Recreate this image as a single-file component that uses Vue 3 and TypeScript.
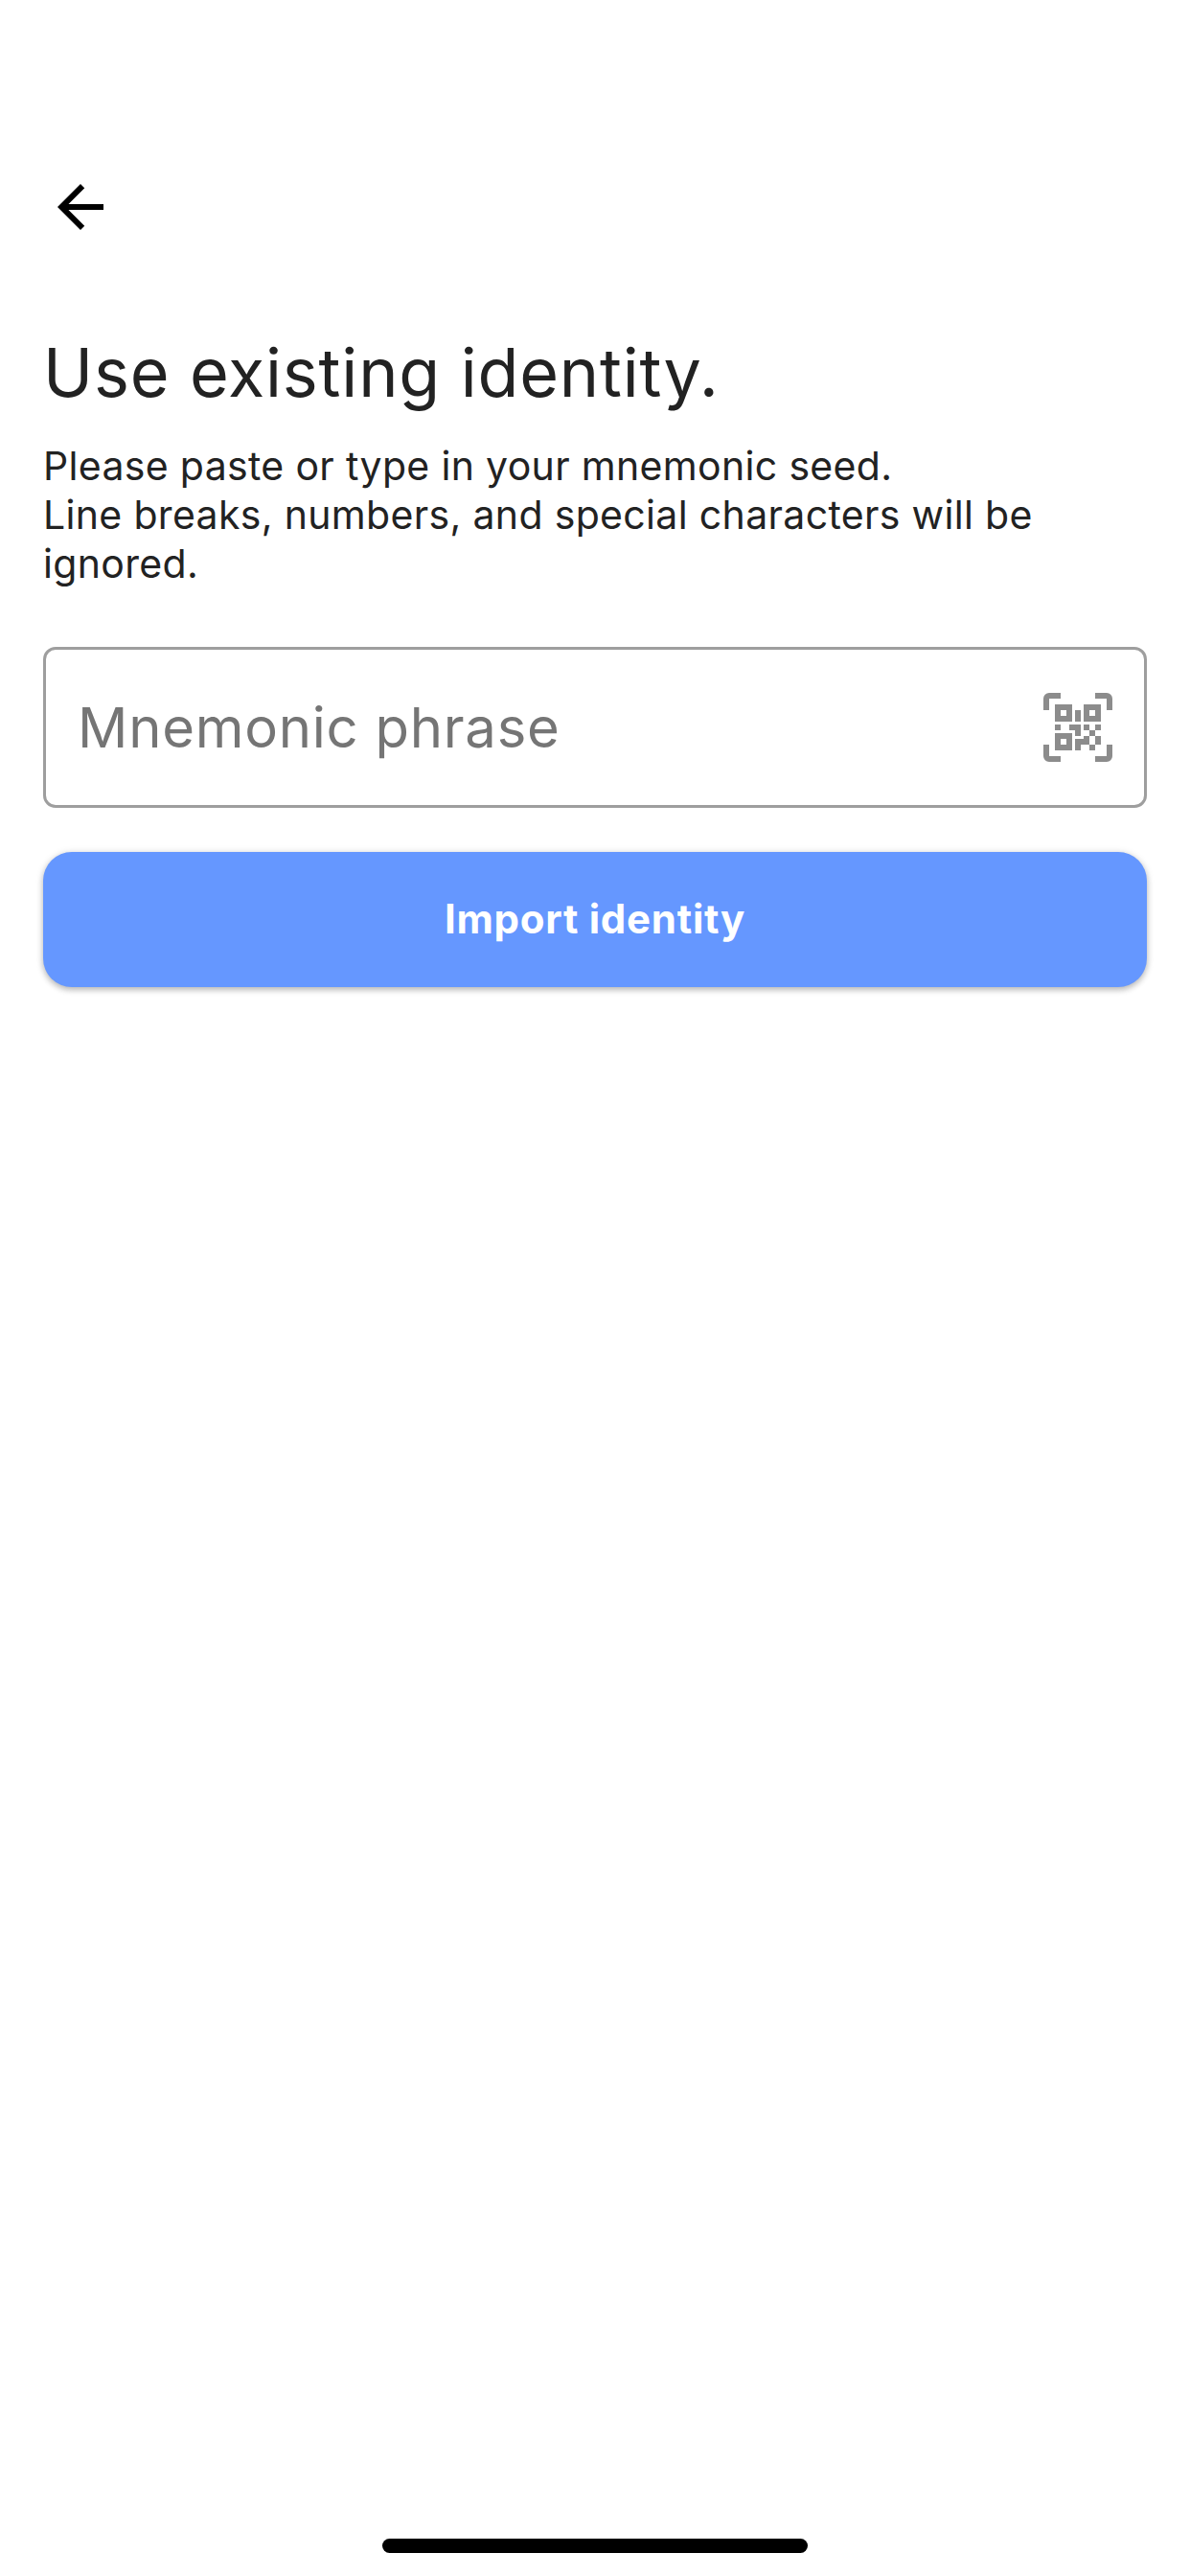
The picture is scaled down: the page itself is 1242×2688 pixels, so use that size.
<script setup lang="ts">
import { ref } from 'vue'

const phrase = ref('')
</script>

<template>
  <div class="screen">
    <header class="app-bar">
      <button class="back" type="button" aria-label="Back">
        <svg viewBox="0 0 24 24" width="72" height="72" fill="#000">
          <path d="M20 11H7.83l5.59-5.59L12 4l-8 8 8 8 1.41-1.41L7.83 13H20v-2z" />
        </svg>
      </button>
    </header>

    <main class="content">
      <h1>Use existing identity.</h1>
      <p class="description">
        Please paste or type in your mnemonic seed.<br />
        Line breaks, numbers, and special characters will be ignored.
      </p>

      <div class="field">
        <input v-model="phrase" type="text" placeholder="Mnemonic phrase" />
        <svg class="scan" viewBox="0 0 24 24" width="72" height="72" fill="#8c8c8c">
          <path
            d="M4,4H10V10H4V4M20,4V10H14V4H20M14,15H16V13H14V11H16V13H18V11H20V13H18V15H20V18H18V20H16V18H13V20H11V16H14V15M16,15V18H18V15H16M4,20V14H10V20H4M6,6V8H8V6H6M16,6V8H18V6H16M6,16V18H8V16H6M4,11H6V13H4V11M9,11H13V15H11V13H9V11M11,6H13V10H11V6M2,2V6H0V2A2,2 0 0,1 2,0H6V2H2M22,0A2,2 0 0,1 24,2V6H22V2H18V0H22M2,18V22H6V24H2A2,2 0 0,1 0,22V18H2M22,22V18H24V22A2,2 0 0,1 22,24H18V22H22Z"
          />
        </svg>
      </div>

      <button class="import" type="button">Import identity</button>
    </main>

    <footer class="home"><span class="indicator"></span></footer>
  </div>
</template>

<style>
body {
  background: #fff;
}
</style>

<style scoped>
.screen {
  display: flex;
  flex-direction: column;
  box-sizing: border-box;
  width: 1242px;
  height: 2688px;
  padding-top: 132px;
  background: #fff;
  color: #222;
  font-family: Inter, 'Liberation Sans', sans-serif;
}
.app-bar {
  display: flex;
  align-items: center;
  height: 168px;
  padding-left: 48px;
}
.back {
  display: flex;
  padding: 0;
  border: 0;
  background: none;
}
.content {
  display: flex;
  flex-direction: column;
  flex: 1;
  padding: 47px 45px 0;
}
h1 {
  margin: 0;
  font-size: 70px;
  line-height: 84px;
  font-weight: 400;
  letter-spacing: 0.84px;
}
.description {
  margin: 30px 0 0;
  font-size: 41px;
  line-height: 51px;
  letter-spacing: 0.33px;
}
.field {
  display: flex;
  align-items: center;
  box-sizing: border-box;
  height: 168px;
  margin-top: 61px;
  padding: 0 33px;
  border: 3px solid #9e9e9e;
  border-radius: 13px;
}
.field input {
  flex: 1;
  min-width: 0;
  height: 100%;
  padding: 0;
  border: 0;
  outline: 0;
  background: none;
  color: #222;
  font: 400 58px Inter, 'Liberation Sans', sans-serif;
  letter-spacing: 0.74px;
}
.field input::placeholder {
  color: #757575;
  opacity: 1;
}
.import {
  height: 141px;
  margin-top: 46px;
  padding: 0 0 2px;
  border: 0;
  border-radius: 30px;
  background: #6597ff;
  box-shadow: 0 3px 6px rgba(0, 0, 0, 0.22), 0 1px 8px rgba(0, 0, 0, 0.12);
  color: #fff;
  font: 700 42px Inter, 'Liberation Sans', sans-serif;
  letter-spacing: 0.75px;
}
.home {
  display: flex;
  justify-content: center;
  padding-bottom: 24px;
}
.indicator {
  width: 444px;
  height: 15px;
  border-radius: 8px;
  background: #000;
}
</style>
